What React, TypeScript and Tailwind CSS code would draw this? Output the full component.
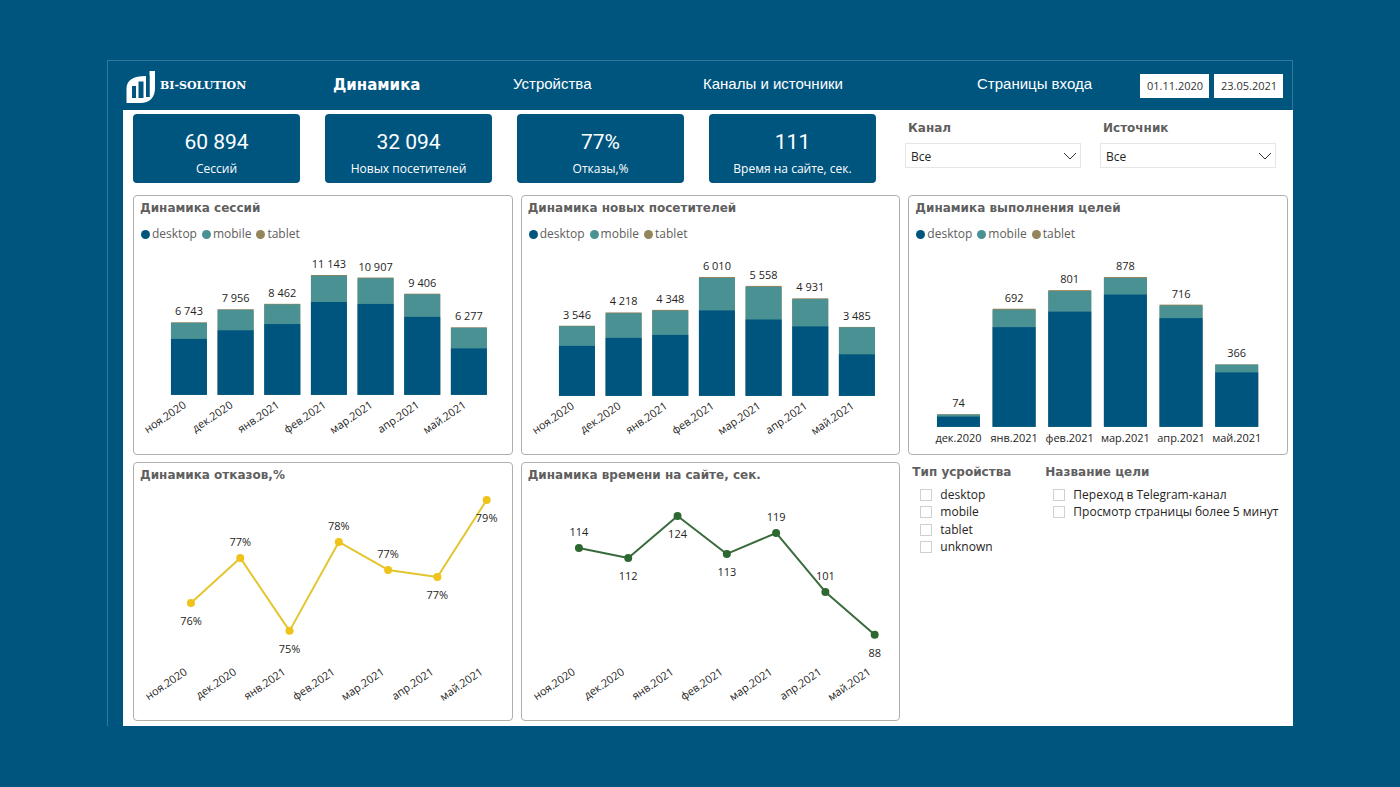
type Bar = { month: string; total: number; desktop: number; tablet: number }
type Point = { month: string; label: string; y: number; below?: boolean }

const nav = ['Динамика', 'Устройства', 'Каналы и источники', 'Страницы входа']

const kpis = [
  { value: '60 894', label: 'Сессий' },
  { value: '32 094', label: 'Новых посетителей' },
  { value: '77%', label: 'Отказы,%' },
  { value: '111', label: 'Время на сайте, сек.' },
]

const legend = [
  { name: 'desktop', color: 'bg-[#00557f]' },
  { name: 'mobile', color: 'bg-[#4a9194]' },
  { name: 'tablet', color: 'bg-[#94855b]' },
]

const sessions: Bar[] = [
  { month: 'ноя.2020', total: 6743, desktop: 5200, tablet: 50 },
  { month: 'дек.2020', total: 7956, desktop: 6000, tablet: 50 },
  { month: 'янв.2021', total: 8462, desktop: 6580, tablet: 50 },
  { month: 'фев.2021', total: 11143, desktop: 8630, tablet: 70 },
  { month: 'мар.2021', total: 10907, desktop: 8450, tablet: 70 },
  { month: 'апр.2021', total: 9406, desktop: 7250, tablet: 60 },
  { month: 'май.2021', total: 6277, desktop: 4320, tablet: 40 },
]

const visitors: Bar[] = [
  { month: 'ноя.2020', total: 3546, desktop: 2525, tablet: 25 },
  { month: 'дек.2020', total: 4218, desktop: 2930, tablet: 40 },
  { month: 'янв.2021', total: 4348, desktop: 3080, tablet: 40 },
  { month: 'фев.2021', total: 6010, desktop: 4320, tablet: 50 },
  { month: 'мар.2021', total: 5558, desktop: 3860, tablet: 45 },
  { month: 'апр.2021', total: 4931, desktop: 3510, tablet: 40 },
  { month: 'май.2021', total: 3485, desktop: 2100, tablet: 20 },
]

const goals: Bar[] = [
  { month: 'дек.2020', total: 74, desktop: 60, tablet: 2 },
  { month: 'янв.2021', total: 692, desktop: 584, tablet: 6 },
  { month: 'фев.2021', total: 801, desktop: 675, tablet: 6 },
  { month: 'мар.2021', total: 878, desktop: 775, tablet: 6 },
  { month: 'апр.2021', total: 716, desktop: 637, tablet: 5 },
  { month: 'май.2021', total: 366, desktop: 319, tablet: 2 },
]

const bounces: Point[] = [
  { month: 'ноя.2020', label: '76%', y: 116, below: true },
  { month: 'дек.2020', label: '77%', y: 71 },
  { month: 'янв.2021', label: '75%', y: 144, below: true },
  { month: 'фев.2021', label: '78%', y: 55 },
  { month: 'мар.2021', label: '77%', y: 83 },
  { month: 'апр.2021', label: '77%', y: 90, below: true },
  { month: 'май.2021', label: '79%', y: 13, below: true },
]

const times: Point[] = [
  { month: 'ноя.2020', label: '114', y: 61 },
  { month: 'дек.2020', label: '112', y: 71, below: true },
  { month: 'янв.2021', label: '124', y: 29, below: true },
  { month: 'фев.2021', label: '113', y: 67, below: true },
  { month: 'мар.2021', label: '119', y: 46 },
  { month: 'апр.2021', label: '101', y: 105 },
  { month: 'май.2021', label: '88', y: 148, below: true },
]

const heading = "font-['DejaVu_Sans',sans-serif] font-bold text-[12px] text-[#5f5f5f]"

const format = (n: number) => String(n).replace(/\B(?=(\d{3})+$)/g, ' ')

function Logo() {
  return (
    <a href="#" className="flex items-center gap-1 text-white">
      <svg viewBox="0 0 30 34" className="h-[34px] w-[30px]" aria-hidden="true">
        <path d="M.5 33V19C.5 10 7 6 20 6v21h3.500V1H29v17c0 9-5 15-15 15Z" fill="currentColor" />
        <path d="M6 16h4v12H6zM12.500 11.500h5V28h-5zM20.500 5h3v22h-3z" fill="#00557f" />
      </svg>
      <span className="font-['DejaVu_Serif',serif] text-[11px] font-bold">BI-SOLUTION</span>
    </a>
  )
}

function Panel({ title, children }: { title: string; children: React.ReactNode }) {
  return (
    <section className="rounded-[4px] border border-[#b0b0b0]">
      <h2 className={`flex h-6 items-center pl-1.5 whitespace-nowrap ${heading}`}>{title}</h2>
      {children}
    </section>
  )
}

function Legend() {
  return (
    <ul className="flex h-7 items-center gap-[5px] pl-[7px] text-[12px] text-[#605e5c]">
      {legend.map((item) => (
        <li key={item.name} className="flex items-center gap-0.5">
          <span className={`size-[9px] rounded-full ${item.color}`}></span>
          {item.name}
        </li>
      ))}
    </ul>
  )
}

function TiltedLabel({ x, y, text }: { x: number; y: number; text: string }) {
  return (
    <text x={x} y={y} textAnchor="end" transform={`rotate(-34 ${x} ${y})`}>
      {text}
    </text>
  )
}

function BarChart({
  data,
  start,
  step,
  width,
  base,
  height,
  tilted,
}: {
  data: Bar[]
  start: number
  step: number
  width: number
  base: number
  height: number
  tilted?: boolean
}) {
  const scale = height / Math.max(...data.map((d) => d.total))

  return (
    <svg viewBox="0 0 378 206" className="block w-full" fontSize="11" fill="#252423">
      {data.map((d, i) => {
        const x = start + i * step
        const mid = x + width / 2
        const top = base - d.total * scale
        return (
          <g key={d.month}>
            <rect x={x} y={top} width={width} height={d.total * scale} fill="#94855b" />
            <rect x={x} y={top + d.tablet * scale} width={width} height={(d.total - d.tablet) * scale} fill="#4a9194" />
            <rect x={x} y={base - d.desktop * scale} width={width} height={d.desktop * scale} fill="#00557f" />
            <text x={mid} y={top - 7} textAnchor="middle">
              {format(d.total)}
            </text>
            {tilted ? (
              <TiltedLabel x={mid - 2} y={base + 12} text={d.month} />
            ) : (
              <text x={mid} y={base + 15} textAnchor="middle">
                {d.month}
              </text>
            )}
          </g>
        )
      })}
    </svg>
  )
}

function LineChart({ data, color, dot }: { data: Point[]; color: string; dot: string }) {
  const px = (i: number) => 57 + (i * 296) / 6

  return (
    <svg viewBox="0 0 378 233" className="block w-full" fontSize="11" fill="#252423">
      <polyline
        points={data.map((d, i) => `${px(i)},${d.y}`).join(' ')}
        fill="none"
        stroke={color}
        strokeWidth="2"
        strokeLinejoin="round"
      />
      {data.map((d, i) => (
        <g key={d.month}>
          <circle cx={px(i)} cy={d.y} r="4" fill={dot} />
          <text x={px(i)} y={d.below ? d.y + 22 : d.y - 12} textAnchor="middle">
            {d.label}
          </text>
          <TiltedLabel x={px(i) - 3} y={187} text={d.month} />
        </g>
      ))}
    </svg>
  )
}

function Filter({ id, label }: { id: string; label: string }) {
  return (
    <div className="pt-1">
      <label htmlFor={id} className={`flex h-5 items-center pl-[3px] ${heading}`}>
        {label}
      </label>
      <div className="relative mt-[5px]">
        <select
          id={id}
          className="block h-[25px] w-full appearance-none border border-[#e6e6e6] bg-white pt-0.5 pl-[5px] text-[12px] text-[#252423]"
        >
          <option>Все</option>
        </select>
        <svg
          viewBox="0 0 14 8"
          className="pointer-events-none absolute top-[9px] right-1 h-2 w-3.5 text-[#333]"
          fill="none"
          stroke="currentColor"
          aria-hidden="true"
        >
          <path d="M1 1l6 6 6-6" />
        </svg>
      </div>
    </div>
  )
}

function CheckList({ title, items }: { title: string; items: string[] }) {
  return (
    <fieldset>
      <legend className={`flex h-5 items-center ${heading}`}>{title}</legend>
      <div className="mt-1 grid h-[70px] grid-rows-4 pl-2">
        {items.map((item) => (
          <label key={item} className="flex items-center gap-2 text-[12px] whitespace-nowrap text-[#252423]">
            <input type="checkbox" className="size-3 appearance-none border border-[#d0d0d0] bg-white" />
            {item}
          </label>
        ))}
      </div>
    </fieldset>
  )
}

export default function App() {
  return (
    <div className="min-h-screen bg-[#00557f] px-[107px] py-[60px] font-['Open_Sans','Noto_Sans',sans-serif]">
      <div className="border border-b-0 border-[#2f7a9c]">
        {/* Header */}
        <header className="flex h-[49px] items-center pr-[9px] pl-[18px]">
          <div className="w-[207px] shrink-0 pt-0.5">
            <Logo />
          </div>
          <nav className="grid flex-1 grid-cols-[180fr_190fr_274fr_163fr] items-center font-['Liberation_Sans',Arial,sans-serif] text-[15px] whitespace-nowrap text-white">
            {nav.map((item, i) =>
              i === 0 ? (
                <a key={item} href="#" className="font-['DejaVu_Sans',sans-serif] font-bold">
                  {item}
                </a>
              ) : (
                <a key={item} href="#" className="pb-0.5">
                  {item}
                </a>
              ),
            )}
          </nav>
          <div className="flex gap-[5px] text-[11px] text-[#333]">
            <input aria-label="Начало периода" defaultValue="01.11.2020" className="h-6 w-[69px] bg-white pl-[7px]" />
            <input aria-label="Конец периода" defaultValue="23.05.2021" className="h-6 w-[69px] bg-white pl-[7px]" />
          </div>
        </header>

        <main className="-mr-px ml-[15px] bg-white pt-1 pr-[5px] pb-[5px] pl-2.5">
          {/* KPI cards and filters */}
          <div className="grid grid-cols-[743fr_371fr] gap-[29px] pr-3">
            <div className="grid grid-cols-4 gap-[25px]">
              {kpis.map((kpi) => (
                <div key={kpi.label} className="h-[69px] rounded-[4px] bg-[#00557f] pt-3.5 text-center text-white">
                  <p className="font-['Roboto',sans-serif] text-[21px] leading-7">{kpi.value}</p>
                  <p className="mt-1 text-[12px] leading-[18px]">{kpi.label}</p>
                </div>
              ))}
            </div>
            <div className="grid grid-cols-2 gap-[19px]">
              <Filter id="channel" label="Канал" />
              <Filter id="source" label="Источник" />
            </div>
          </div>

          {/* Charts */}
          <div className="mt-3 grid grid-cols-3 gap-x-2 gap-y-[7px]">
            <Panel title="Динамика сессий">
              <Legend />
              <BarChart data={sessions} start={37} step={46.7} width={36} base={147} height={120} tilted />
            </Panel>
            <Panel title="Динамика новых посетителей">
              <Legend />
              <BarChart data={visitors} start={37} step={46.7} width={36} base={148} height={119} tilted />
            </Panel>
            <Panel title="Динамика выполнения целей">
              <Legend />
              <BarChart data={goals} start={28} step={55.7} width={43} base={179} height={150} />
            </Panel>
            <Panel title="Динамика отказов,%">
              <LineChart data={bounces} color="#e3c62f" dot="#efc318" />
            </Panel>
            <Panel title="Динамика времени на сайте, сек.">
              <LineChart data={times} color="#3a6b3c" dot="#2c682f" />
            </Panel>
            <div className="flex items-start gap-[34px] pl-1">
              <CheckList title="Тип усройства" items={['desktop', 'mobile', 'tablet', 'unknown']} />
              <CheckList
                title="Название цели"
                items={['Переход в Telegram-канал', 'Просмотр страницы более 5 минут']}
              />
            </div>
          </div>
        </main>
      </div>
    </div>
  )
}
